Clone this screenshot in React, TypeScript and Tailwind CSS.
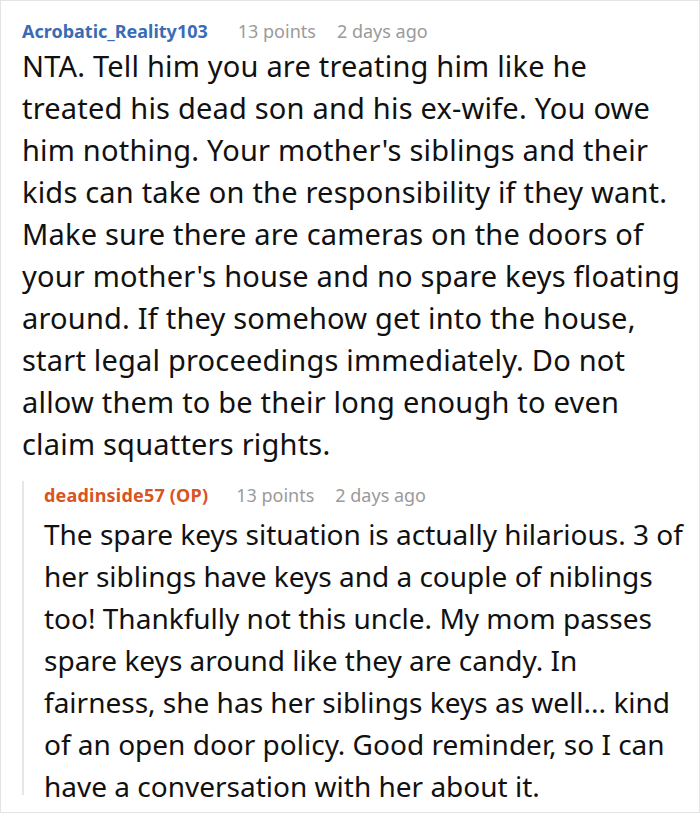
const first = [
  'NTA. Tell him you are treating him like he',
  'treated his dead son and his ex-wife. You owe',
  "him nothing. Your mother's siblings and their",
  'kids can take on the responsibility if they want.',
  'Make sure there are cameras on the doors of',
  "your mother's house and no spare keys floating",
  'around. If they somehow get into the house,',
  'start legal proceedings immediately. Do not',
  'allow them to be their long enough to even',
  'claim squatters rights.',
];

const reply = [
  'The spare keys situation is actually hilarious. 3 of',
  'her siblings have keys and a couple of niblings',
  'too! Thankfully not this uncle. My mom passes',
  'spare keys around like they are candy. In',
  'fairness, she has her siblings keys as well... kind',
  'of an open door policy. Good reminder, so I can',
  'have a conversation with her about it.',
];

export default function App() {
  return (
    <div className="w-[700px] h-[814px] bg-white" style={{ fontFamily: '"Noto Sans", "Open Sans", sans-serif' }}>
      <div className="h-[813px] border border-[#e4e4e4] pl-[21px] pr-2 pt-[16px] overflow-hidden">
        <div className="flex items-center h-[28px] text-[18px] whitespace-nowrap">
          <span className="font-bold text-[#3a6cb6]">Acrobatic_Reality103</span>
          <span className="ml-[30px] text-[#9a9a9a]">13 points</span>
          <span className="ml-[21px] text-[#9a9a9a]">2 days ago</span>
        </div>
        <p className="text-[29px] leading-[42px] text-[#111] tracking-[0.2px] whitespace-nowrap">
          {first.map((l) => (
            <span key={l} className="block">{l}</span>
          ))}
        </p>
        <div className="mt-[16px] border-l-2 border-[#e6e6e6] pl-[20px] h-[314px]">
          <div className="flex items-center h-[28px] text-[18px] whitespace-nowrap">
            <span className="font-bold text-[#d9541e] tracking-[0.2px]">deadinside57 (OP)</span>
            <span className="ml-[28px] text-[#9a9a9a]">13 points</span>
            <span className="ml-[21px] text-[#9a9a9a]">2 days ago</span>
          </div>
          <p className="text-[28px] leading-[42px] text-[#111] mt-[4px] whitespace-nowrap">
            {reply.map((l) => (
              <span key={l} className="block">{l}</span>
            ))}
          </p>
        </div>
      </div>
    </div>
  );
}
